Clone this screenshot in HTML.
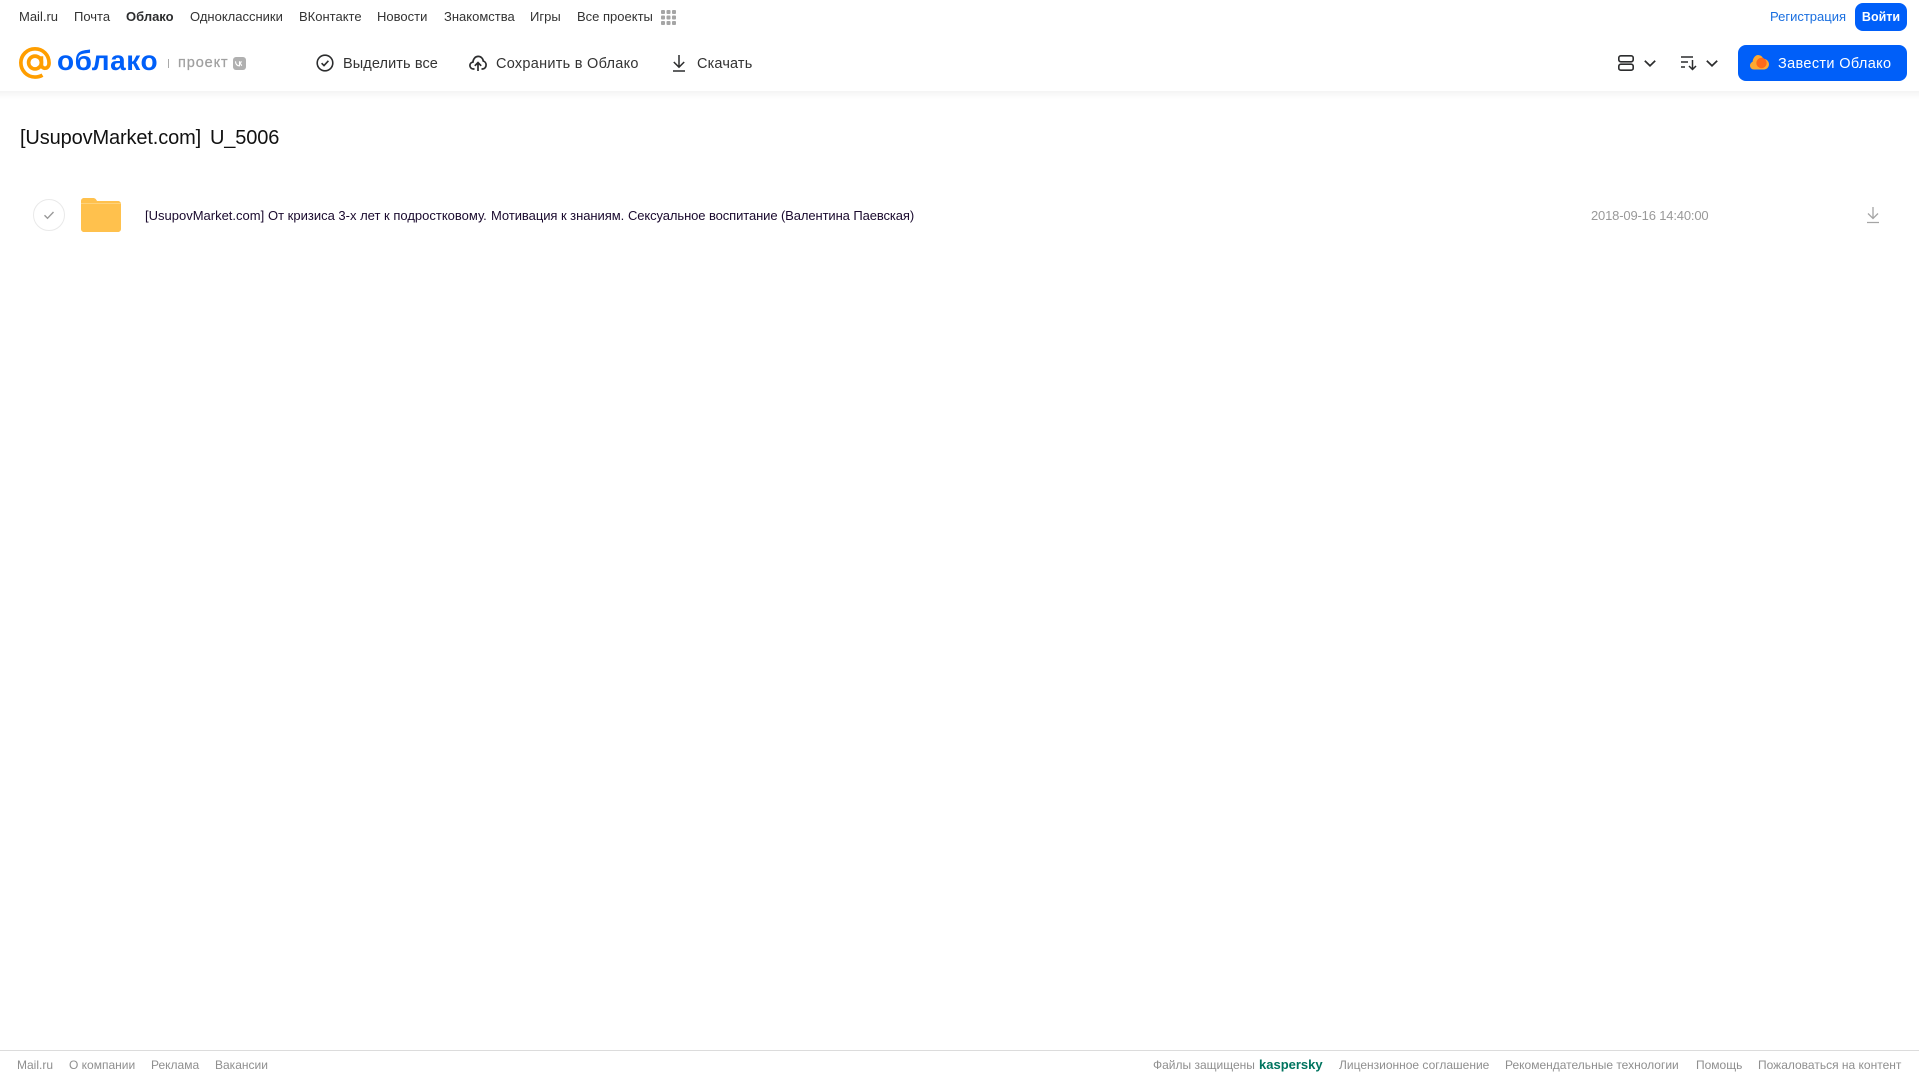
<!DOCTYPE html>
<html lang="ru"><head><meta charset="utf-8"><title>Облако</title>
<style>
html,body{margin:0;padding:0;background:#fff;width:1919px;height:1079px;overflow:hidden;font-family:"Liberation Sans",sans-serif}
.t{position:absolute;white-space:nowrap;line-height:18px}
.n{top:8px;font-size:13px;color:#333}
.b{top:55px;font-size:14.5px;color:#333}
.f{top:1056px;font-size:12px;color:#8f8f8f}
.r{top:207px;font-size:13px;color:#1a0a2e}
svg{position:absolute;overflow:visible}
</style></head><body>
<div style="position:absolute;left:0;top:91px;width:1919px;height:8px;background:linear-gradient(#f4f4f4,#fff)"></div>
<span class="t n" style="left:19px">Mail.ru</span>
<span class="t n" style="left:74px">Почта</span>
<span class="t n" style="left:126px;font-weight:bold;color:#2c2d2e">Облако</span>
<span class="t n" style="left:190px">Одноклассники</span>
<span class="t n" style="left:299px">ВКонтакте</span>
<span class="t n" style="left:377px">Новости</span>
<span class="t n" style="left:444px">Знакомства</span>
<span class="t n" style="left:530px">Игры</span>
<span class="t n" style="left:577px">Все проекты</span>
<svg style="left:661px;top:10px" width="15" height="15" fill="#a5a5a5"><rect width="4" height="4" rx="1"/><rect x="5.500" width="4" height="4" rx="1"/><rect x="11" width="4" height="4" rx="1"/><rect y="5.500" width="4" height="4" rx="1"/><rect x="5.500" y="5.500" width="4" height="4" rx="1"/><rect x="11" y="5.500" width="4" height="4" rx="1"/><rect y="11" width="4" height="4" rx="1"/><rect x="5.500" y="11" width="4" height="4" rx="1"/><rect x="11" y="11" width="4" height="4" rx="1"/></svg>
<span class="t n" style="left:1770px;color:#1a6fe0">Регистрация</span>
<div style="position:absolute;left:1855px;top:3px;width:52px;height:28px;background:#005ff9;border-radius:8px;color:#fff;font-size:12.500px;font-weight:bold;line-height:28px;text-align:center">Войти</div>

<svg style="left:19px;top:47px" width="32" height="32" viewBox="0 0 33 33" fill="none" stroke="#ff9e00" stroke-width="3.800"><circle cx="16.500" cy="16" r="6.600"/><path d="M23.100 9.500v8.500c0 5.400 7.900 5.400 7.900-1.500C31 8 24.500 1.900 16.500 1.900S1.900 8.200 1.900 16.300 8.300 31 16.500 31c3 0 5.300-.6 7.700-2"/></svg>
<span class="t" style="left:57px;top:44px;line-height:34px;font-size:28px;font-weight:bold;color:#005ff9;letter-spacing:.55px">облако</span>
<div style="position:absolute;left:168px;top:59px;width:1px;height:9px;background:#aaa"></div>
<span class="t" style="left:178px;top:54px;font-size:14.500px;color:#a0a0a0;letter-spacing:.9px;-webkit-text-stroke:.25px #a0a0a0">проект</span>
<svg style="left:233px;top:57px" width="13" height="13"><rect width="13" height="13" rx="3" fill="#b0b0b0"/><path d="M2.500 4.300c.1 2.800 1.600 4.500 4 4.500V4.300M6.500 6.500c1 .1 1.700 1 2.200 2.300M6.500 6.500c.8-.1 1.500-1 1.800-2.200" stroke="#fff" stroke-width="1.100" fill="none"/></svg>

<svg style="left:316px;top:54px" width="18" height="18" fill="none" stroke="#2c2d2e" stroke-width="1.600"><circle cx="9" cy="9" r="7.800"/><path d="M5.600 9.200l2.400 2.400 4.400-4.800"/></svg>
<span class="t b" style="left:343px;letter-spacing:.1px">Выделить все</span>
<svg style="left:469px;top:54px" width="18" height="18" fill="none" stroke="#2c2d2e" stroke-width="1.700"><path d="M5.500 15H4.500C2.300 15 .9 13.400.9 11.500c0-1.800 1.300-3.200 3-3.400C4.200 4.800 6.300 2.400 9.200 2.400c2.700 0 4.800 2 5.100 4.700 1.600.4 2.800 2 2.800 3.800 0 2.300-1.500 4.100-3.700 4.100h-.9"/><path d="M9 17V8.800M5.800 11.800L9 8.600l3.200 3.200"/></svg>
<span class="t b" style="left:496px;letter-spacing:.27px">Сохранить в Облако</span>
<svg style="left:672px;top:54px" width="14" height="18" fill="none" stroke="#2c2d2e" stroke-width="1.500"><path d="M7 1v12M1.800 8l5.200 5.200L12.200 8M1 17h12"/></svg>
<span class="t b" style="left:697px;letter-spacing:.15px">Скачать</span>

<svg style="left:1618px;top:55px" width="16" height="16" fill="none" stroke="#2c2d2e" stroke-width="1.600"><rect x=".8" y=".8" width="14.400" height="6" rx="2"/><rect x=".8" y="9.200" width="14.400" height="6" rx="2"/></svg>
<svg style="left:1644px;top:60px" width="12" height="7" fill="none" stroke="#2c2d2e" stroke-width="1.700"><path d="M.8.800L6 5.800 11.200.800"/></svg>
<svg style="left:1681px;top:55px" width="16" height="16" fill="none" stroke="#2c2d2e" stroke-width="1.500"><path d="M0 2h12M0 7h7M0 12h4M11.500 5v9.500M8 11l3.500 3.500L15 11"/></svg>
<svg style="left:1706px;top:60px" width="12" height="7" fill="none" stroke="#2c2d2e" stroke-width="1.700"><path d="M.8.800L6 5.800 11.200.800"/></svg>

<div style="position:absolute;left:1738px;top:45px;width:169px;height:36px;background:#005ff9;border-radius:8px"></div>
<svg style="left:1750px;top:54px" width="19" height="16"><path d="M4 15.500C1.800 15.500 0 13.800 0 11.500c0-1.800 1.100-3.200 2.600-3.800C3 3.800 5.500 1 8 1c2.600 0 4.600 1.800 5.400 4 3-.3 5.600 2.300 5.600 5.300 0 2.900-2.300 5.200-5 5.200z" fill="#ffa930"/><circle cx="11.500" cy="9" r="5.200" fill="#ff6a1a"/></svg>
<span class="t b" style="left:1778px;color:#fff;letter-spacing:.35px">Завести Облако</span>

<span class="t" style="left:20px;top:125px;line-height:26px;font-size:20px;color:#111;letter-spacing:-.13px;word-spacing:3.5px">[UsupovMarket.com] U_5006</span>

<svg style="left:33px;top:199px" width="32" height="32" fill="none"><circle cx="16" cy="16" r="15.500" stroke="#e9e9e9"/><path d="M11.500 16.300l3 3 6-6.300" stroke="#999" stroke-width="1.400"/></svg>
<svg style="left:81px;top:198px" width="40" height="34"><path d="M3 0h9c2 0 3 1 4 3h21c1.700 0 3 1.300 3 3v25c0 1.700-1.300 3-3 3H3c-1.700 0-3-1.300-3-3V3C0 1.300 1.300 0 3 0z" fill="#ffc14d"/><rect y="5" width="40" height="1" fill="#ffd27a"/></svg>
<span class="t r" style="left:145px">[UsupovMarket.com]</span>
<span class="t r" style="left:268px">От кризиса 3-х лет к подростковому.</span>
<span class="t r" style="left:491px;letter-spacing:-.05px">Мотивация к знаниям.</span>
<span class="t r" style="left:628px;letter-spacing:-.1px">Сексуальное воспитание (Валентина Паевская)</span>
<span class="t" style="left:1591px;top:207px;font-size:13px;color:#999;letter-spacing:-.17px">2018-09-16 14:40:00</span>
<svg style="left:1866px;top:206px" width="14" height="18" fill="none" stroke="#a5a5a5" stroke-width="1.300"><path d="M7 1v11.500M2 7.500l5 5 5-5M1 16.500h12"/></svg>

<div style="position:absolute;left:0;top:1050px;width:1919px;height:1px;background:#dcdcdc"></div>
<span class="t f" style="left:17px">Mail.ru</span>
<span class="t f" style="left:69px">О компании</span>
<span class="t f" style="left:151px">Реклама</span>
<span class="t f" style="left:215px">Вакансии</span>
<span class="t f" style="left:1153px">Файлы защищены</span>
<span class="t f" style="left:1259px;font-weight:bold;font-size:13px;color:#00745f">kaspersky</span>
<span class="t f" style="left:1339px">Лицензионное соглашение</span>
<span class="t f" style="left:1505px">Рекомендательные технологии</span>
<span class="t f" style="left:1696px">Помощь</span>
<span class="t f" style="left:1758px">Пожаловаться на контент</span>
</body></html>
